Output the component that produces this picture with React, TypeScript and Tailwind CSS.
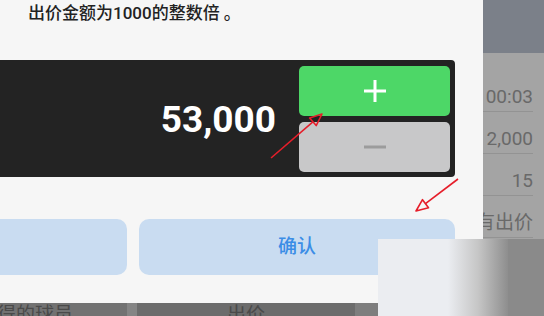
const rows = ['00:03', '2,000', '15', '有出价'];

export default function App() {
  return (
    <div className="relative w-[544px] h-[316px] overflow-hidden bg-[#6e6e6e] flex flex-col font-['Roboto','Noto_Sans_CJK_SC',sans-serif]">
      <div className="flex h-[303px]">
        {/* Dialog */}
        <div className="w-[483px] bg-[#f6f6f6] flex flex-col">
          <div className="h-[60px] pl-[28px] pt-[5px] text-[17px] leading-[17px] font-medium text-[#222]">
            出价金额为1000的整数倍 。
          </div>
          <div className="w-[455px] h-[117px] bg-[#232323] rounded-r-[4px] flex items-center justify-end pt-[6px] pb-[5px] pr-[5px]">
            <span className="mr-[23px] text-[37px] font-bold text-white leading-none">53,000</span>
            <div className="flex flex-col gap-[6px] w-[151px] h-full">
              <button className="flex-1 rounded-[5px] bg-[#4dd767] flex items-center justify-center">
                <svg width="24" height="24" viewBox="0 0 24 24">
                  <path d="M12 1v22M1 12h22" stroke="#fff" strokeWidth="3" />
                </svg>
              </button>
              <button className="flex-1 rounded-[5px] bg-[#c8c8c9] flex items-center justify-center">
                <svg width="24" height="24" viewBox="0 0 24 24">
                  <path d="M1 12h22" stroke="#9c9c9c" strokeWidth="3" />
                </svg>
              </button>
            </div>
          </div>
          <div className="flex gap-[12px] mt-[42px] h-[56px] w-[455px]">
            <button className="ml-[-20px] w-[147px] rounded-[10px] bg-[#c9dcf1]" />
            <button className="flex-1 rounded-[10px] bg-[#c9dcf1] text-[19px] font-medium text-[#3b8de6]">
              确认
            </button>
          </div>
        </div>
        {/* Background list */}
        <div className="flex-1 flex flex-col overflow-hidden">
          <div className="h-[53px] bg-[#7b8089]" />
          <div className="flex-1 bg-[#a4a4a4] pt-[17px]">
            {rows.map((r) => (
              <div
                key={r}
                className="h-[42px] mr-[11px] border-b border-[#939393] flex items-end justify-end pb-[3px] text-[19px] leading-[22px] text-[#696969] whitespace-nowrap"
              >
                {r}
              </div>
            ))}
          </div>
        </div>
      </div>
      {/* Bottom table header */}
      <div className="h-[13px] flex text-[19px] leading-[22px] text-[#4a4a4a] whitespace-nowrap overflow-hidden">
        <div className="w-[127px] bg-[#727272] pt-[1px]">
          <span className="ml-[-3px]">得的球员</span>
        </div>
        <div className="w-[10px] bg-[#858585]" />
        <div className="w-[218px] bg-[#6c6c6c] text-center pt-[1px]">出价</div>
        <div className="flex-1 bg-[#7e7e7e]" />
      </div>

      {/* Watermark patch */}
      <div className="absolute left-[378px] top-[239px] w-[166px] h-[77px] overflow-hidden flex">
        <div className="w-[70px] bg-[#ebedf1]" />
        <div className="w-[60px] bg-gradient-to-r from-[#ebedf1] via-[#c6c6c6] to-[#8e8e8e]" />
        <div className="flex-1 bg-[#8a8a8a]" />
      </div>

      {/* Red annotation arrows */}
      <svg className="absolute inset-0 pointer-events-none" width="544" height="316" viewBox="0 0 544 316">
        <g stroke="#e61e2a" strokeWidth="1.6" fill="none" strokeLinejoin="round">
          <line x1="271" y1="158" x2="312.9" y2="121.8" />
          <polygon points="322,114 316.2,125.6 309.6,118" />
          <line x1="458" y1="179" x2="425.5" y2="203.7" />
          <polygon points="416,211 428.5,207.7 422.5,199.7" />
        </g>
      </svg>
    </div>
  );
}
